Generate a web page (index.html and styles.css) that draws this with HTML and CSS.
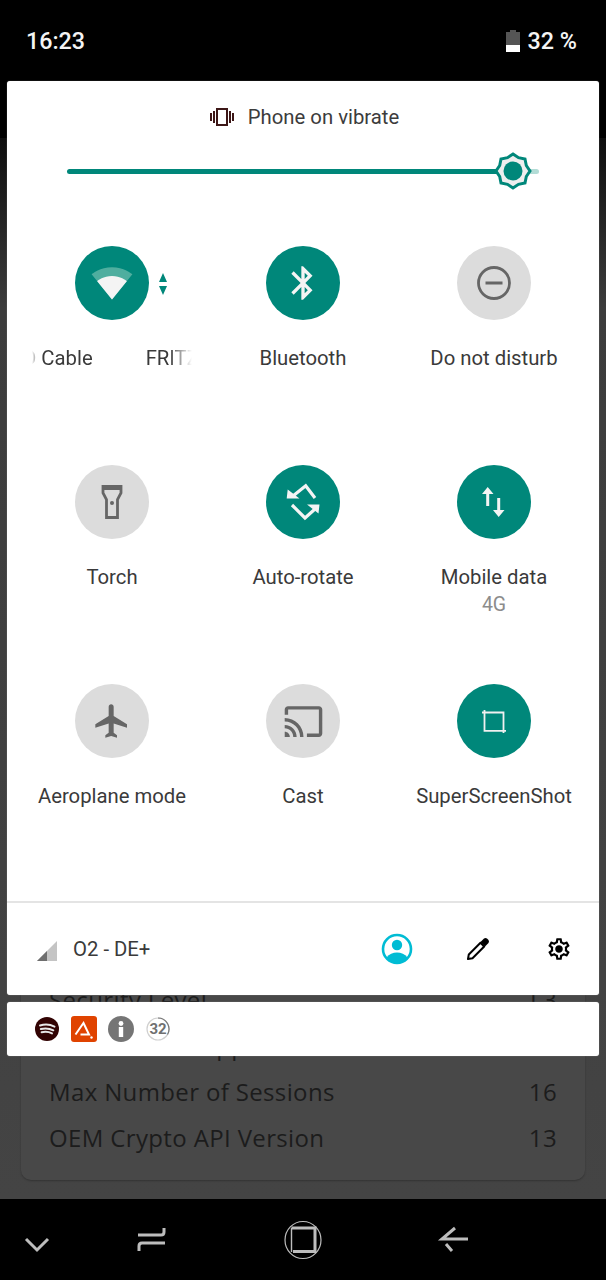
FILE: index.html
```html
<!DOCTYPE html>
<html lang="en">
<head>
<meta charset="utf-8">
<title>Quick settings</title>
<link rel="stylesheet" href="styles.css">
</head>
<body>
<div class="screen">
  <div class="app">
    <div class="app-card">
      <div class="app-row"><span>Security Level</span><span>L3</span></div>
      <div class="app-row"><span>HDCP Level Support</span><span>1</span></div>
      <div class="app-row"><span>Max Number of Sessions</span><span>16</span></div>
      <div class="app-row"><span>OEM Crypto API Version</span><span>13</span></div>
    </div>
  </div>

  <header class="status">
    <span class="clock">16:23</span>
    <div class="battery-wrap">
      <svg class="battery" viewBox="0 0 14 22" width="14" height="22"><path class="battery-empty" d="M4 0h6v2h4v13H0V2h4z"/><rect class="battery-full" x="0" y="15" width="14" height="7"/></svg>
      <span class="percent">32 %</span>
    </div>
  </header>

  <section class="panel">
    <div class="ringer">
      <svg class="vibrate" viewBox="0 0 24 18" width="24" height="18"><rect x="7" y="1" width="10" height="16" class="vib-body"/><rect x="3" y="3" width="2" height="12" class="vib-bar"/><rect x="0" y="5" width="2" height="8" class="vib-bar"/><rect x="19" y="3" width="2" height="12" class="vib-bar"/><rect x="22" y="5" width="2" height="8" class="vib-bar"/></svg>
      <span>Phone on vibrate</span>
    </div>
    <div class="slider">
      <div class="slider-on"></div>
      <div class="slider-off"></div>
      <svg class="thumb" viewBox="0 0 40 40" width="40" height="40"><polygon class="thumb-star" points="20,3 25.5,6.7 32,8 33.3,14.5 37,20 33.3,25.5 32,32 25.5,33.3 20,37 14.5,33.3 8,32 6.7,25.5 3,20 6.7,14.5 8,8 14.5,6.7"/><circle class="thumb-dot" cx="20" cy="20" r="9.5"/></svg>
    </div>

    <div class="tiles">
      <div class="tile">
        <div class="disc on wifi-disc">
          <svg viewBox="0 0 24 24" width="42" height="42"><path class="wifi-dim" d="M12.01 21.49L23.64 7c-.45-.34-4.93-4-11.64-4C5.28 3 .81 6.66.36 7l11.63 14.49.01.01.01-.01z"/><path class="wifi-lit" d="M3.53 10.95l8.46 10.54.01.01.01-.01 8.46-10.54C20.04 10.62 16.81 8 12 8c-4.81 0-8.04 2.62-8.47 2.95z"/></svg>
          <svg class="wifi-arrows" viewBox="0 0 10 22" width="10" height="22"><path d="M5 0l4 9H1zM5 22l-4-9h8z"/></svg>
        </div>
        <div class="label marquee"><div class="marquee-text"><span>D Cable</span><span>FRITZ!Box</span></div></div>
      </div>
      <div class="tile">
        <div class="disc on"><svg viewBox="0 0 24 24" width="40" height="40"><path d="M17.71 7.71L12 2h-1v7.59L6.41 5 5 6.41 10.59 12 5 17.59 6.41 19 11 14.41V22h1l5.71-5.71-4.3-4.29 4.3-4.29zM13 5.83l1.88 1.88L13 9.59V5.83zm1.88 10.46L13 18.17v-3.76l1.88 1.88z"/></svg></div>
        <div class="label">Bluetooth</div>
      </div>
      <div class="tile">
        <div class="disc off"><svg viewBox="0 0 40 40" width="40" height="40"><circle class="line" cx="20" cy="20" r="15.5"/><rect x="11.5" y="18.5" width="17" height="3"/></svg></div>
        <div class="label">Do not disturb</div>
      </div>

      <div class="tile">
        <div class="disc off"><svg viewBox="0 0 40 40" width="40" height="40"><path class="line" d="M11 4.5H29V11L25.5 17.5V35.5H14.5V17.5L11 11Z"/><rect x="10" y="3" width="20" height="5"/><circle cx="20" cy="21" r="2"/></svg></div>
        <div class="label">Torch</div>
      </div>
      <div class="tile">
        <div class="disc on"><svg viewBox="0 0 40 40" width="40" height="40"><path class="line rotate-line" d="M9 14.7L22.7 3.700L32 16M9 23L22 36L32 27"/><path d="M3.700 16.500L4.700 7.500L16.500 16.500ZM36.500 22.500L35.500 31.500L24 22.500Z"/></svg></div>
        <div class="label">Auto-rotate</div>
      </div>
      <div class="tile">
        <div class="disc on"><svg viewBox="0 0 40 40" width="40" height="40"><path d="M13.7 5L19.5 12H15.2V24H12.2V12H8ZM24.7 35L19 28H23.2V16H26.2V28H30.5Z"/></svg></div>
        <div class="label">Mobile data<small>4G</small></div>
      </div>

      <div class="tile">
        <div class="disc off"><svg viewBox="0 0 24 24" width="40" height="40"><path d="M21 16v-2l-8-5V3.5c0-.83-.67-1.5-1.5-1.5S10 2.67 10 3.5V9l-8 5v2l8-2.5V19l-2 1.5V22l3.5-1 3.5 1v-1.5L13 19v-5.5l8 2.5z"/></svg></div>
        <div class="label">Aeroplane mode</div>
      </div>
      <div class="tile">
        <div class="disc off"><svg viewBox="0 0 24 24" width="41" height="41"><path d="M21 3H3c-1.1 0-2 .9-2 2v3h2V5h18v14h-7v2h7c1.1 0 2-.9 2-2V5c0-1.1-.9-2-2-2zM1 18v3h3c0-1.66-1.34-3-3-3zm0-4v2c2.76 0 5 2.24 5 5h2c0-3.87-3.13-7-7-7zm0-4v2c4.97 0 9 4.03 9 9h2c0-6.08-4.93-11-11-11z"/></svg></div>
        <div class="label">Cast</div>
      </div>
      <div class="tile">
        <div class="disc on"><svg viewBox="0 0 40 40" width="40" height="40"><path class="thin" d="M8 11.500H29.500V32M10.500 9V29.800H32"/></svg></div>
        <div class="label">SuperScreenShot</div>
      </div>
    </div>

    <footer class="panel-foot">
      <svg class="signal" viewBox="0 0 20 20" width="20" height="20"><path class="signal-dim" d="M20 0V20H0Z"/><path class="signal-lit" d="M10 10V20H0Z"/></svg>
      <span class="carrier">O2 - DE+</span>
      <svg class="foot-icon" viewBox="0 0 32 32" width="32" height="32"><circle class="avatar-ring" cx="16" cy="16" r="14"/><circle class="avatar-fill" cx="16" cy="12" r="5.2"/><path class="avatar-fill" d="M5.5 24.500C8 21 12 19.600 16 19.600S24 21 26.500 24.500C24 28 20 30 16 30S8 28 5.500 24.500Z"/></svg>
      <svg class="foot-icon pencil" viewBox="0 0 24 24" width="24" height="24"><path class="pencil-body" d="M2 22L2.800 17.500L14.500 5.800L18.200 9.500L6.500 21.200Z"/><path class="pencil-cap" d="M14.500 5L18 1.500Q19.500 .500 21 1.500L22.500 3Q23.500 4.500 22.500 6L19 9.500Z"/></svg>
      <svg class="foot-icon gear" viewBox="0 0 24 24" width="26" height="26"><path d="M19.43 12.98c.04-.32.07-.64.07-.98s-.03-.66-.07-.98l2.11-1.65c.19-.15.24-.42.12-.64l-2-3.46c-.12-.22-.39-.3-.61-.22l-2.49 1c-.52-.4-1.08-.73-1.69-.98l-.38-2.65C14.46 2.18 14.25 2 14 2h-4c-.25 0-.46.18-.49.42l-.38 2.65c-.61.25-1.17.59-1.69.98l-2.49-1c-.23-.09-.49 0-.61.22l-2 3.46c-.13.22-.07.49.12.64l2.11 1.65c-.04.32-.07.65-.07.98s.03.66.07.98l-2.11 1.65c-.19.15-.24.42-.12.64l2 3.46c.12.22.39.3.61.22l2.49-1c.52.4 1.08.73 1.69.98l.38 2.65c.03.24.24.42.49.42h4c.25 0 .46-.18.49-.42l.38-2.65c.61-.25 1.17-.59 1.69-.98l2.49 1c.23.09.49 0 .61-.22l2-3.46c.12-.22.07-.49-.12-.64l-2.11-1.65zM17.45 11.27c.04.31.05.52.05.73 0 .21-.02.43-.05.73l-.14 1.13.89.7 1.08.84-.7 1.21-1.27-.51-1.04-.42-.9.68c-.43.32-.84.56-1.25.73l-1.06.43-.16 1.13-.2 1.35h-1.4l-.19-1.35-.16-1.13-1.06-.43c-.43-.18-.83-.41-1.23-.71l-.91-.7-1.06.43-1.27.51-.7-1.21 1.08-.84.89-.7-.14-1.13c-.03-.31-.05-.54-.05-.74s.02-.43.05-.73l.14-1.13-.89-.7-1.08-.84.7-1.21 1.27.51 1.04.42.9-.68c.43-.32.84-.56 1.25-.73l1.06-.43.16-1.13.2-1.35h1.39l.19 1.35.16 1.13 1.06.43c.43.18.83.41 1.23.71l.91.7 1.06-.43 1.27-.51.7 1.21-1.07.85-.89.7.14 1.13zM12 8.500c-1.930 0-3.500 1.570-3.500 3.500s1.570 3.500 3.500 3.500 3.500-1.570 3.500-3.500-1.570-3.500-3.500-3.500z"/></svg>
    </footer>
  </section>

  <section class="notif">
    <svg class="notif-icon" viewBox="0 0 26 26" width="26" height="26"><circle class="spot-bg" cx="13" cy="13" r="12"/><path class="spot-arc" d="M6 9.500C11 8 16 8.300 20.500 10.600M6.800 13C11 12 15.500 12.300 19.300 14.300M7.600 16.300C11 15.500 14.800 15.800 18 17.400"/></svg>
    <svg class="notif-icon" viewBox="0 0 26 26" width="26" height="26"><rect class="app-red" width="26" height="26" rx="3"/><path class="app-red-line" d="M4.500 18.500L12.500 7L18 18.500H9.500"/><circle class="app-red-dot" cx="20.500" cy="21.500" r="1.200"/></svg>
    <svg class="notif-icon" viewBox="0 0 26 26" width="26" height="26"><circle class="info-bg" cx="13" cy="13" r="13"/><circle class="info-fg" cx="13" cy="7.500" r="2.400"/><rect class="info-fg" x="10.800" y="11" width="4.400" height="10"/></svg>
    <div class="level">
      <svg viewBox="0 0 24 24" width="24" height="24"><circle class="level-ring" cx="12" cy="12" r="11"/><path class="level-arc" d="M12 1A11 11 0 0 1 21.500 17.500"/></svg>
      <span>32</span>
    </div>
  </section>

  <nav class="nav">
    <svg viewBox="0 0 40 40" width="40" height="40"><path class="nav-line" d="M9 19L20 30L31 19"/></svg>
    <svg viewBox="0 0 40 40" width="40" height="40"><path class="nav-line" d="M7 15H30Q33 15 33 12V8M34 23H11Q8 23 8 26V31"/></svg>
    <svg viewBox="0 0 40 40" width="40" height="40"><ellipse class="nav-thin" cx="20" cy="20" rx="18" ry="18.500"/><path class="nav-line" d="M8.500 8H32V31.500H10"/><path class="nav-fine" d="M8.500 8V32"/></svg>
    <svg viewBox="0 0 40 40" width="40" height="40"><path class="nav-line" d="M34 19H8L21 8M12 24L18 31"/></svg>
  </nav>
</div>
</body>
</html>
```
FILE: styles.css
```css
* { box-sizing: border-box; }
html, body { margin: 0; padding: 0; background: #000; }
body { font-family: Roboto, "Liberation Sans", sans-serif; }
svg { display: block; flex: none; }

.screen {
  position: relative;
  width: 606px;
  height: 1280px;
  overflow: hidden;
  background: #000;
  display: flex;
  flex-direction: column;
}

/* dimmed app behind the shade */
.app {
  position: absolute;
  left: 0;
  right: 0;
  top: 138px;
  bottom: 81px;
  background: linear-gradient(#0e0e0e 0, #3c3c3c 170px, #444 100%);
  padding: 0 21px 19px;
  display: flex;
  flex-direction: column;
  justify-content: flex-end;
}
.app-card {
  background: #484848;
  border-radius: 10px;
  box-shadow: 0 1px 2px rgba(0,0,0,.25);
  padding: 0 28px 20px;
}
.app-row {
  height: 46px;
  display: flex;
  align-items: center;
  justify-content: space-between;
  font-family: "Open Sans", "Noto Sans", sans-serif;
  font-size: 24px;
  letter-spacing: .36px;
  color: #1c1c1c;
}

/* status bar */
.status {
  position: relative;
  height: 81px;
  flex: none;
  padding: 0 29px 0 26px;
  display: flex;
  align-items: center;
  justify-content: space-between;
  color: #f4f4f4;
  font-size: 23.3px;
  font-weight: 500;
}
.battery-wrap { display: flex; align-items: center; gap: 8px; }
.battery-empty { fill: #555; }
.battery-full { fill: #fff; }

/* panel */
.panel {
  position: relative;
  flex: none;
  width: 592px;
  height: 914px;
  margin-left: 7px;
  background: #fff;
  border-radius: 3px;
  box-shadow: 0 0 1px rgba(255,255,255,.6);
  display: flex;
  flex-direction: column;
}
.ringer {
  flex: none;
  height: 72px;
  padding-left: 3px;
  display: flex;
  align-items: center;
  justify-content: center;
  gap: 14px;
  font-size: 20.3px;
  color: #3c3c3c;
}
.vib-body { fill: #fff; stroke: #3d1717; stroke-width: 2; }
.vib-bar { fill: #3d1717; }

.slider {
  position: relative;
  flex: none;
  height: 36px;
  margin: 0 60px;
  display: flex;
  align-items: center;
}
.slider-on { width: 440px; height: 5px; border-radius: 3px 0 0 3px; background: #00877a; }
.slider-off { flex: 1; height: 5px; border-radius: 0 3px 3px 0; background: #b3dcd6; }
.thumb { position: absolute; left: 426px; top: -2px; }
.thumb-star { fill: #eee; stroke: #00877a; stroke-width: 3; stroke-linejoin: miter; }
.thumb-dot { fill: #00877a; }

.tiles {
  flex: 1;
  min-height: 0;
  padding: 57px 0 0 9.5px;
  display: grid;
  grid-template-columns: repeat(3, 191px);
  grid-auto-rows: 219px;
}
.tile { display: flex; flex-direction: column; align-items: center; }
.disc {
  position: relative;
  flex: none;
  width: 74px;
  height: 74px;
  border-radius: 50%;
  display: flex;
  align-items: center;
  justify-content: center;
}
.disc.on { background: #00877a; fill: #f4f4f4; stroke: none; }
.disc.off { background: #dcdcdc; fill: #666; }
.line { fill: none; stroke-width: 2.8; }
.disc.off .line { stroke: #666; }
.disc.on .line { stroke: #f4f4f4; }
.disc.on .rotate-line { stroke-width: 3.2; }
.disc .thin { fill: none; stroke: #f0f0f0; stroke-width: 1.8; }
.wifi-dim { fill: #4fae9f; }
.wifi-lit { fill: #f4f4f4; }
.wifi-arrows { position: absolute; left: 83px; top: 27px; fill: #00877a; }

.label {
  margin-top: 25px;
  width: 100%;
  text-align: center;
  font-size: 20.3px;
  line-height: 26px;
  color: #3a3a3a;
  white-space: nowrap;
}
.label small { display: block; font-size: 19.5px; line-height: 29px; color: #8c8c8c; }
.marquee {
  overflow: hidden;
  width: 160px;
  text-align: left;
  -webkit-mask-image: linear-gradient(to right, transparent 0, #000 8px, #000 136px, transparent 160px);
  mask-image: linear-gradient(to right, transparent 0, #000 8px, #000 136px, transparent 160px);
}
.marquee-text { display: flex; gap: 53px; margin-left: -9px; }

.panel-foot {
  flex: none;
  height: 94px;
  border-top: 2px solid #e4e4e4;
  padding: 0 27px 0 30px;
  display: flex;
  align-items: center;
}
.signal { margin-top: 4px; }
.signal-dim { fill: #c4c4c4; }
.signal-lit { fill: #6e6e6e; }
.carrier { margin-left: 16px; font-size: 20.3px; color: #3a3a3a; margin-right: auto; }
.avatar-ring { fill: #fff; stroke: #00bcd4; stroke-width: 2.6; }
.avatar-fill { fill: #00bcd4; }
.pencil { margin-left: 53px; }
.pencil-body { fill: #fff; stroke: #000; stroke-width: 2; stroke-linejoin: round; }
.pencil-cap { fill: #000; }
.gear { margin-left: 56px; }

/* notification strip */
.notif {
  position: relative;
  flex: none;
  width: 592px;
  height: 54px;
  margin: 7px 0 0 7px;
  padding-left: 27px;
  background: #fff;
  border-radius: 3px;
  box-shadow: 0 0 1px rgba(255,255,255,.6);
  display: flex;
  align-items: center;
  gap: 11px;
}
.spot-bg { fill: #320303; }
.spot-arc { fill: none; stroke: #e8e8e8; stroke-width: 2; stroke-linecap: round; }
.app-red { fill: #e04300; }
.app-red-line { fill: none; stroke: #fff; stroke-width: 2; }
.app-red-dot { fill: #fff; }
.info-bg { fill: #757575; }
.info-fg { fill: #fff; }
.level { position: relative; display: flex; align-items: center; justify-content: center; width: 24px; height: 24px; margin-left: 1px; }
.level span { position: absolute; font-size: 15px; font-weight: 700; color: #707070; }
.level-ring { fill: none; stroke: #d0d0d0; stroke-width: 1.2; }
.level-arc { fill: none; stroke: #777; stroke-width: 1.2; }

/* nav bar */
.nav {
  position: relative;
  margin-top: auto;
  height: 81px;
  flex: none;
  padding: 21px 0 0 17px;
  display: grid;
  grid-template-columns: 114px 152px 151px 40px;
  align-items: start;
}
.nav-line { fill: none; stroke: #bdbdbd; stroke-width: 3; }
.nav-thin { fill: none; stroke: #bdbdbd; stroke-width: 1.2; }
.nav-fine { fill: none; stroke: #bdbdbd; stroke-width: 1.4; }
```
